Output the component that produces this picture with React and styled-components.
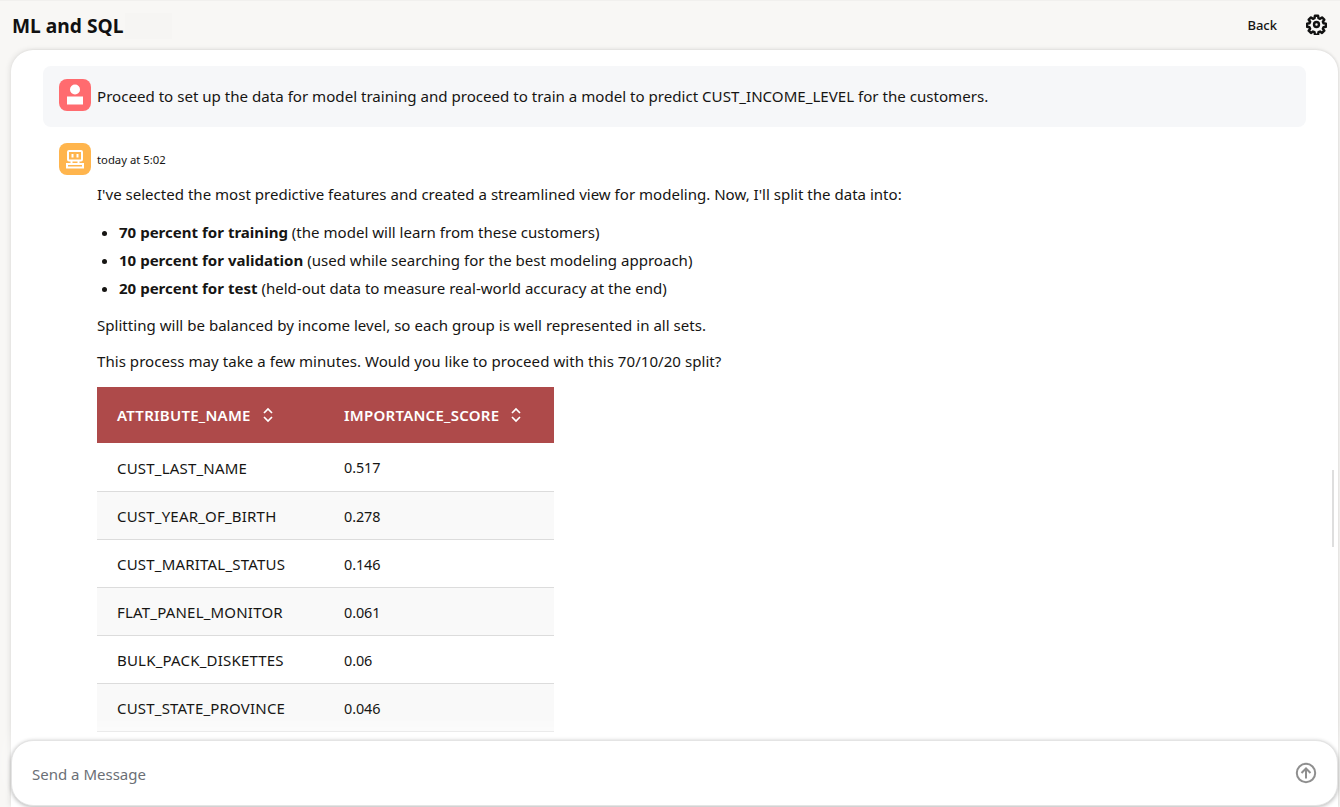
import React from "react";
import styled, { createGlobalStyle } from "styled-components";

const Global = createGlobalStyle`
  html, body { margin: 0; height: 100%; overflow: hidden; background: #f8f7f5; }
  #root { height: 100%; }
  * { box-sizing: border-box; }
`;
const FONT = `"Noto Sans", "Open Sans", Arial, sans-serif`;

const Page = styled.div`
  height: 807px; display: flex; flex-direction: column; position: relative;
  font-family: ${FONT}; color: #161513; background: #f8f7f5; border-top: 1px solid #f1f0ee;
`;
const Header = styled.header`
  height: 49px; flex: none; display: flex; align-items: center; justify-content: space-between;
  padding: 0 13px 0 12px;
`;
const TitleGroup = styled.div`display: flex; align-items: center; gap: 2px;`;
const Title = styled.h1`
  margin: 0; font-size: 19.2px; font-weight: 700; line-height: 26px; color: #111;
`;
const TitleGhost = styled.div`width: 47px; height: 26px; background: #f6f5f3;`;
const HeaderActions = styled.div`
  display: flex; align-items: center; gap: 29px; padding-bottom: 2px;
`;
const BackButton = styled.button`
  border: 0; background: none; padding: 0; font: 500 13px ${FONT}; color: #161513;
`;
const Card = styled.main`
  flex: 1; min-height: 0; margin: 0 2px 0 11px; background: #fff; border-radius: 22px 22px 0 0;
  overflow: hidden; padding: 16px 32px 0; box-shadow: -2px -1px 5px rgba(0,0,0,.07), 1px 0 3px rgba(0,0,0,.1);
`;
const UserBubble = styled.section`
  height: 61px; width: 1263px; background: #f6f7f9; border-radius: 8px; display: flex; align-items: center;
  gap: 6px; padding: 0 16px 3px;
`;
const Avatar = styled.div`
  width: 32px; height: 32px; border-radius: 8px; background: ${p => p.$bg}; flex: none;
  display: flex; align-items: center; justify-content: center;
`;
const Message = styled.p`margin: 0; padding-top: 2px; font-size: 15.1px; line-height: 20px;`;
const Reply = styled.section`padding: 16px 16px 0;`;
const ReplyHead = styled.div`display: flex; align-items: center; gap: 6px; height: 32px;`;
const Time = styled.span`font-size: 11.3px; color: #161513;`;
const Body = styled.div`padding: 9px 0 0 38px;`;
const Para = styled.p`
  margin: 0 0 ${p => p.$gap || 16}px; font-size: 15.05px; line-height: 20px; letter-spacing: ${p => p.$track || 0}px;
`;
const List = styled.ul`margin: 0 0 17px; padding: 0 0 0 22px;`;
const Item = styled.li`
  font-size: 15.05px; line-height: 20px; margin-bottom: 8px;
  &:last-child { margin-bottom: 0; }
`;
const Table = styled.table`
  width: 457px; border-collapse: collapse; table-layout: fixed; margin-top: 15px;
`;
const HeadRow = styled.tr`background: #ae4a4a; color: #fff; height: 56px;`;
const Th = styled.th`
  width: ${p => p.$w}px; text-align: left; padding: 0 0 0 20px; font-weight: 600;
  font-size: 15px; letter-spacing: .25px;
`;
const ThInner = styled.span`display: inline-flex; align-items: center; gap: 11px;`;
const Tr = styled.tr`
  height: 48px; background: ${p => (p.$alt ? "#f9f9f9" : "#fff")}; border-bottom: 1px solid #dcdcdc;
`;
const Td = styled.td`
  padding: 2px 0 0 20px; color: #161513;
  font-size: ${p => (p.$num ? 14.4 : 15)}px; letter-spacing: ${p => (p.$num ? -.1 : .2)}px;
`;
const Composer = styled.form`
  position: absolute; left: 11px; right: 2px; bottom: 1px; height: 66px; background: #fff;
  border-radius: 22px; border: 1px solid #e4e4e4; display: flex; align-items: center;
  justify-content: space-between; padding: 0 20px 0 20px;
  box-shadow: 0 1px 4px rgba(0,0,0,.3), 0 -10px 20px rgba(255,255,255,.75);
`;
const Placeholder = styled.span`padding-top: 2px; font-size: 15px; color: #6b6f76;`;
const ScrollThumb = styled.div`
  position: absolute; left: 1332px; top: 469px; width: 2px; height: 77px; background: #dedede;
`;

const Gear = () => (
  <svg width="21" height="21" viewBox="0 0 24 24" fill="none" stroke="#111" strokeWidth="2.8" strokeLinejoin="round">
    <path d="M10.2 2h3.6l.5 2.8 1.7.7 2.3-1.6 2.6 2.6-1.6 2.3.7 1.7 2.8.5v3.6l-2.8.5-.7 1.7 1.6 2.3-2.6 2.6-2.3-1.6-1.7.7-.5 2.8h-3.6l-.5-2.8-1.7-.7-2.3 1.6-2.6-2.6 1.6-2.3-.7-1.7-2.8-.5v-3.6l2.8-.5.7-1.7-1.6-2.3 2.6-2.6 2.3 1.6 1.7-.7z" />
    <circle cx="12" cy="12" r="2.8" />
  </svg>
);
const UserIcon = () => (
  <svg width="32" height="32" viewBox="0 0 32 32" fill="#fff">
    <circle cx="16" cy="10.5" r="5" />
    <rect x="8" y="17.5" width="16" height="8" />
  </svg>
);
const BotIcon = () => (
  <svg width="32" height="32" viewBox="0 0 32 32" fill="none" stroke="#fff" strokeWidth="2">
    <rect x="9" y="8" width="14" height="9.5" rx="1" />
    <path d="M13.5 11v3.5M18.5 11v3.5M12.5 17.5v3.5h7v-3.5" />
    <rect x="8" y="21" width="16" height="3.5" />
  </svg>
);
const Sort = () => (
  <svg width="12" height="16" viewBox="0 0 12 16" fill="none" stroke="#fff" strokeWidth="1.7">
    <path d="M2 6l4-4 4 4M2 10l4 4 4-4" />
  </svg>
);
const SendIcon = () => (
  <svg width="22" height="22" viewBox="0 0 22 22" fill="none" stroke="#8f8f8f" strokeWidth="2">
    <circle cx="11" cy="11" r="9.2" />
    <path d="M6.5 11L11 6.5l4.5 4.5M11 6.5V16.5" />
  </svg>
);

const rows = [
  ["CUST_LAST_NAME", "0.517"],
  ["CUST_YEAR_OF_BIRTH", "0.278"],
  ["CUST_MARITAL_STATUS", "0.146"],
  ["FLAT_PANEL_MONITOR", "0.061"],
  ["BULK_PACK_DISKETTES", "0.06"],
  ["CUST_STATE_PROVINCE", "0.046"],
  ["COUNTRY_NAME", "0.03"],
];

export default function App() {
  return (
    <Page>
      <Global />
      <Header>
        <TitleGroup>
          <Title>ML and SQL</Title>
          <TitleGhost />
        </TitleGroup>
        <HeaderActions>
          <BackButton type="button">Back</BackButton>
          <Gear />
        </HeaderActions>
      </Header>
      <Card>
        <UserBubble>
          <Avatar $bg="#ff6b6f"><UserIcon /></Avatar>
          <Message>Proceed to set up the data for model training and proceed to train a model to predict CUST_INCOME_LEVEL for the customers.</Message>
        </UserBubble>
        <Reply>
          <ReplyHead>
            <Avatar $bg="#ffb54d"><BotIcon /></Avatar>
            <Time>today at 5:02</Time>
          </ReplyHead>
          <Body>
            <Para $gap={18}>I've selected the most predictive features and created a streamlined view for modeling. Now, I'll split the data into:</Para>
            <List>
              <Item><b>70 percent for training</b> (the model will learn from these customers)</Item>
              <Item><b>10 percent for validation</b> (used while searching for the best modeling approach)</Item>
              <Item><b>20 percent for test</b> (held-out data to measure real-world accuracy at the end)</Item>
            </List>
            <Para $track={0.02}>Splitting will be balanced by income level, so each group is well represented in all sets.</Para>
            <Para $track={0.04}>This process may take a few minutes. Would you like to proceed with this 70/10/20 split?</Para>
            <Table>
              <thead>
                <HeadRow>
                  <Th $w={227}><ThInner>ATTRIBUTE_NAME <Sort /></ThInner></Th>
                  <Th $w={230}><ThInner>IMPORTANCE_SCORE <Sort /></ThInner></Th>
                </HeadRow>
              </thead>
              <tbody>
                {rows.map((r, i) => (
                  <Tr key={r[0]} $alt={i % 2 === 1}>
                    <Td>{r[0]}</Td>
                    <Td $num>{r[1]}</Td>
                  </Tr>
                ))}
              </tbody>
            </Table>
          </Body>
        </Reply>
      </Card>
      <ScrollThumb />
      <Composer>
        <Placeholder>Send a Message</Placeholder>
        <SendIcon />
      </Composer>
    </Page>
  );
}
